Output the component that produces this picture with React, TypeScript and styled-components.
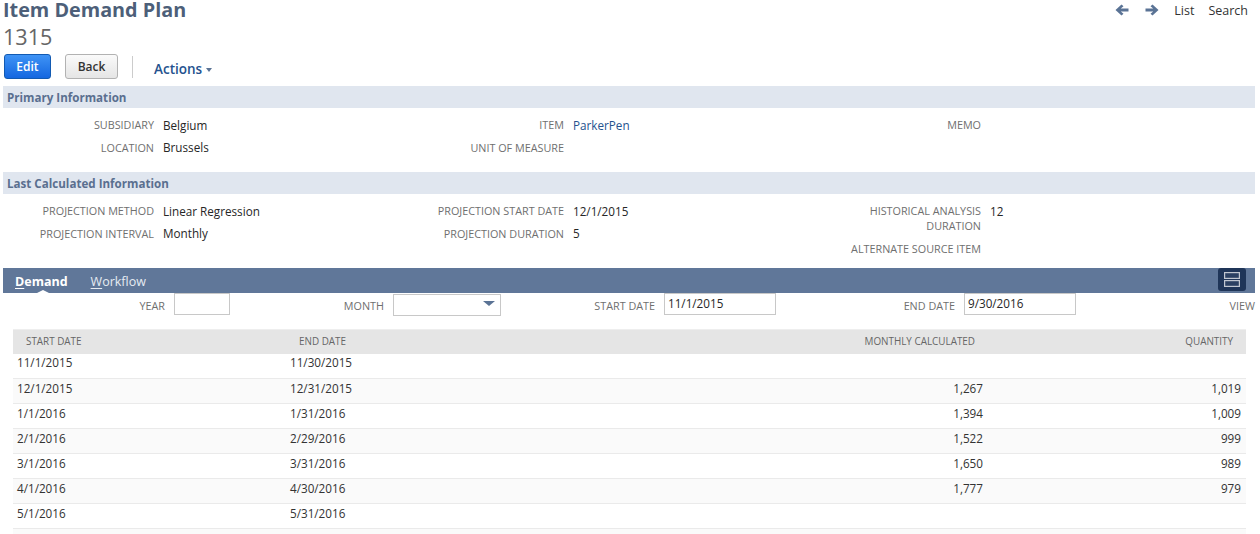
import React from 'react';
import styled, { createGlobalStyle } from 'styled-components';

const GlobalStyle = createGlobalStyle`
    html, body {
        margin: 0;
        padding: 0;
        background: #fff;
        overflow: hidden;
    }
    body {
        font-family: "Open Sans", "Liberation Sans", sans-serif;
        font-size: 12px;
        color: #262626;
    }
`

const Page = styled.div`
    width: 1260px;
    height: 534px;
    overflow: hidden;
`

const TitleArea = styled.div`
    display: flex;
    justify-content: space-between;
    align-items: flex-start;
    padding: 0 12px 0 3px;
    height: 54px;
`

const PageTitle = styled.h1`
    margin: 1px 0 0;
    font-size: 19.8px;
    line-height: 18px;
    font-weight: 700;
    color: #4d5f79;
`

const RecordNumber = styled.div`
    margin-top: 3px;
    font-size: 21.6px;
    line-height: 30px;
    color: #666;
`

const TopNav = styled.div`
    display: flex;
    align-items: center;
    height: 20px;
    font-size: 12.5px;
    color: #333;
`

const NavArrow = styled.svg`
    width: 14px;
    height: 12px;
    margin-right: 16px;
    fill: #5a7395;

    & + & {
        margin-right: 15px;
    }
`

const NavLink = styled.span<{ $gap?: number }>`
    margin-left: ${p => p.$gap ?? 0}px;
`

const ButtonBar = styled.div`
    display: flex;
    align-items: center;
    height: 25px;
    padding-left: 4px;
    margin-bottom: 7px;
`

const Button = styled.button<{ $primary?: boolean }>`
    box-sizing: border-box;
    height: 25px;
    padding: 0;
    border-radius: 3px;
    font-family: inherit;
    font-size: 12px;
    font-weight: 600;
    width: ${p => p.$primary ? 47 : 53}px;
    margin-right: 14px;
    color: ${p => p.$primary ? '#fff' : '#333'};
    border: 1px solid ${p => p.$primary ? '#125ab2' : '#b2b2b2'};
    background: ${p => p.$primary
        ? 'linear-gradient(to bottom, #3f93f5, #1467e0)'
        : 'linear-gradient(to bottom, #fafafa, #e5e5e5)'};
`

const BarDivider = styled.div`
    width: 1px;
    height: 22px;
    background: #ccc;
    margin-right: 21px;
`

const ActionsMenu = styled.div`
    display: flex;
    align-items: center;
    gap: 4px;
    padding-top: 5px;
    font-size: 13.5px;
    font-weight: 600;
    color: #24528e;
`

const Caret = styled.span`
    width: 0;
    height: 0;
    margin-top: 2px;
    border-left: 3.5px solid transparent;
    border-right: 3.5px solid transparent;
    border-top: 4px solid #5a7395;
`

const SectionBar = styled.div`
    margin: 0 5px 0 3px;
    height: 22px;
    line-height: 23px;
    padding-left: 4px;
    background: #e0e6ef;
    font-size: 11.6px;
    font-weight: 700;
    color: #5a6f8f;
`

const FieldGrid = styled.div<{ $height: number }>`
    display: grid;
    grid-template-columns: 410px 417px 1fr;
    height: ${p => p.$height}px;
    padding: 6px 0 0 3px;
    box-sizing: border-box;
`

const FieldColumn = styled.div`
    display: flex;
    flex-direction: column;
`

const FieldLabel = styled.div`
    text-align: right;
    font-size: 10.8px;
    line-height: 15px;
    color: #6f6f6f;
    text-transform: uppercase;
`

const FieldValue = styled.div<{ $link?: boolean }>`
    font-size: 11.7px;
    line-height: 15px;
    color: ${p => p.$link ? '#24528e' : '#262626'};
`

const Field = styled.div`
    display: grid;
    grid-template-columns: 151px 1fr;
    column-gap: 9px;
    padding: 3px 0 5px;

    &:first-child ${FieldValue} {
        padding-top: 1px;
        margin-bottom: -1px;
    }
`

const TabBar = styled.div`
    display: flex;
    align-items: center;
    justify-content: space-between;
    margin: 0 5px 0 3px;
    height: 25px;
    background: #607799;
`

const Tabs = styled.div`
    display: flex;
    padding-left: 12px;
    gap: 23px;
`

const Tab = styled.div<{ $active?: boolean }>`
    position: relative;
    font-size: 12.5px;
    line-height: 27px;
    height: 25px;
    font-weight: ${p => p.$active ? 700 : 400};
    color: ${p => p.$active ? '#fff' : '#e6ebf2'};

    u {
        text-underline-offset: 2px;
    }

    ${p => p.$active && `
        &::after {
            content: '';
            position: absolute;
            left: 50%;
            bottom: 0;
            margin-left: -4px;
            border-left: 6px solid transparent;
            border-right: 6px solid transparent;
            border-bottom: 3px solid #fff;
        }
    `}
`

const ViewToggle = styled.div`
    display: flex;
    align-items: center;
    justify-content: center;
    width: 28px;
    height: 23px;
    align-self: flex-start;
    margin-right: 9px;
    border-radius: 3px;
    background: #1f3558;
`

const FilterRow = styled.div`
    display: grid;
    grid-template-columns: 162px 56px 145px 108px 145px 112px 170px 112px 1fr;
    column-gap: 9px;
    height: 36px;
    padding-left: 3px;
    margin-right: 5px;
`

const FilterLabel = styled.div`
    text-align: right;
    font-size: 10.8px;
    line-height: 26px;
    color: #6f6f6f;
`

const FilterInput = styled.div`
    box-sizing: border-box;
    height: 22px;
    padding-left: 3px;
    border: 1px solid #c8c8c8;
    font-size: 11.7px;
    line-height: 19px;
    color: #262626;
`

const FilterSelect = styled(FilterInput)`
    position: relative;
    margin-top: 1px;

    &::after {
        content: '';
        position: absolute;
        right: 5px;
        top: 6px;
        border-left: 6px solid transparent;
        border-right: 6px solid transparent;
        border-top: 5px solid #5a7395;
    }
`

const TableWrap = styled.div`
    margin: 0 14px 0 13px;
`

const Table = styled.table`
    width: 100%;
    border-collapse: collapse;
    table-layout: fixed;
`

const HeadCell = styled.th<{ $right?: boolean; $width?: number }>`
    box-sizing: border-box;
    height: 24px;
    padding: 0 13px 1px;
    background: #e5e5e5;
    border-top: 1px solid #eee;
    font-size: 9.9px;
    font-weight: 400;
    color: #666;
    text-align: ${p => p.$right ? 'right' : 'left'};
    width: ${p => p.$width ? `${p.$width}px` : 'auto'};
`

const BodyRow = styled.tr`
    &:nth-child(even) td {
        background: #fafafa;
    }
`

const BodyCell = styled.td<{ $right?: boolean }>`
    box-sizing: border-box;
    height: 25px;
    padding: 0 5px 7px 4px;
    border-bottom: 1px solid #eaeaea;
    font-size: 11.7px;
    color: #333;
    text-align: ${p => p.$right ? 'right' : 'left'};
`

const rows = [
    { start: '11/1/2015', end: '11/30/2015', calc: '', qty: '' },
    { start: '12/1/2015', end: '12/31/2015', calc: '1,267', qty: '1,019' },
    { start: '1/1/2016', end: '1/31/2016', calc: '1,394', qty: '1,009' },
    { start: '2/1/2016', end: '2/29/2016', calc: '1,522', qty: '999' },
    { start: '3/1/2016', end: '3/31/2016', calc: '1,650', qty: '989' },
    { start: '4/1/2016', end: '4/30/2016', calc: '1,777', qty: '979' },
    { start: '5/1/2016', end: '5/31/2016', calc: '', qty: '' },
    { start: '', end: '', calc: '', qty: '' },
];

const App = () => {
    return <>
        <GlobalStyle />
        <Page>
            <TitleArea>
                <div>
                    <PageTitle>Item Demand Plan</PageTitle>
                    <RecordNumber>1315</RecordNumber>
                </div>
                <TopNav>
                    <NavArrow viewBox="0 0 14 12">
                        <path d="M6.5 0.5 L0.5 6 L6.5 11.5 L8.5 9.8 L5.8 7.5 L13.5 7.5 L13.5 4.5 L5.8 4.5 L8.5 2.2 Z" />
                    </NavArrow>
                    <NavArrow viewBox="0 0 14 12">
                        <path d="M7.5 0.5 L13.5 6 L7.5 11.5 L5.5 9.8 L8.2 7.5 L0.5 7.5 L0.5 4.5 L8.2 4.5 L5.5 2.2 Z" />
                    </NavArrow>
                    <NavLink>List</NavLink>
                    <NavLink $gap={14}>Search</NavLink>
                </TopNav>
            </TitleArea>
            <ButtonBar>
                <Button $primary>Edit</Button>
                <Button>Back</Button>
                <BarDivider />
                <ActionsMenu>Actions<Caret /></ActionsMenu>
            </ButtonBar>

            <SectionBar>Primary Information</SectionBar>
            <FieldGrid $height={64}>
                <FieldColumn>
                    <Field><FieldLabel>Subsidiary</FieldLabel><FieldValue>Belgium</FieldValue></Field>
                    <Field><FieldLabel>Location</FieldLabel><FieldValue>Brussels</FieldValue></Field>
                </FieldColumn>
                <FieldColumn>
                    <Field><FieldLabel>Item</FieldLabel><FieldValue $link>ParkerPen</FieldValue></Field>
                    <Field><FieldLabel>Unit of Measure</FieldLabel><FieldValue /></Field>
                </FieldColumn>
                <FieldColumn>
                    <Field><FieldLabel>Memo</FieldLabel><FieldValue /></Field>
                </FieldColumn>
            </FieldGrid>

            <SectionBar>Last Calculated Information</SectionBar>
            <FieldGrid $height={74}>
                <FieldColumn>
                    <Field><FieldLabel>Projection Method</FieldLabel><FieldValue>Linear Regression</FieldValue></Field>
                    <Field><FieldLabel>Projection Interval</FieldLabel><FieldValue>Monthly</FieldValue></Field>
                </FieldColumn>
                <FieldColumn>
                    <Field><FieldLabel>Projection Start Date</FieldLabel><FieldValue>12/1/2015</FieldValue></Field>
                    <Field><FieldLabel>Projection Duration</FieldLabel><FieldValue>5</FieldValue></Field>
                </FieldColumn>
                <FieldColumn>
                    <Field><FieldLabel>Historical Analysis Duration</FieldLabel><FieldValue>12</FieldValue></Field>
                    <Field><FieldLabel>Alternate Source Item</FieldLabel><FieldValue /></Field>
                </FieldColumn>
            </FieldGrid>

            <TabBar>
                <Tabs>
                    <Tab $active><u>D</u>emand</Tab>
                    <Tab><u>W</u>orkflow</Tab>
                </Tabs>
                <ViewToggle>
                    <svg width="16" height="15" viewBox="0 0 16 15" fill="#2b4062" stroke="#c0c6d0" strokeWidth="1.2">
                        <rect x="0.6" y="0.6" width="14.8" height="5.8" />
                        <rect x="0.6" y="8.6" width="14.8" height="5.8" />
                    </svg>
                </ViewToggle>
            </TabBar>

            <FilterRow>
                <FilterLabel>YEAR</FilterLabel>
                <FilterInput />
                <FilterLabel>MONTH</FilterLabel>
                <FilterSelect />
                <FilterLabel>START DATE</FilterLabel>
                <FilterInput>11/1/2015</FilterInput>
                <FilterLabel>END DATE</FilterLabel>
                <FilterInput>9/30/2016</FilterInput>
                <FilterLabel>VIEW</FilterLabel>
            </FilterRow>

            <TableWrap>
                <Table>
                    <thead>
                        <tr>
                            <HeadCell $width={273}>START DATE</HeadCell>
                            <HeadCell $width={402}>END DATE</HeadCell>
                            <HeadCell $right>MONTHLY CALCULATED</HeadCell>
                            <HeadCell $right $width={258}>QUANTITY</HeadCell>
                        </tr>
                    </thead>
                    <tbody>
                        {rows.map((row, i) =>
                            <BodyRow key={i}>
                                <BodyCell>{row.start}</BodyCell>
                                <BodyCell>{row.end}</BodyCell>
                                <BodyCell $right>{row.calc}</BodyCell>
                                <BodyCell $right>{row.qty}</BodyCell>
                            </BodyRow>
                        )}
                    </tbody>
                </Table>
            </TableWrap>
        </Page>
    </>
};

export default App;
